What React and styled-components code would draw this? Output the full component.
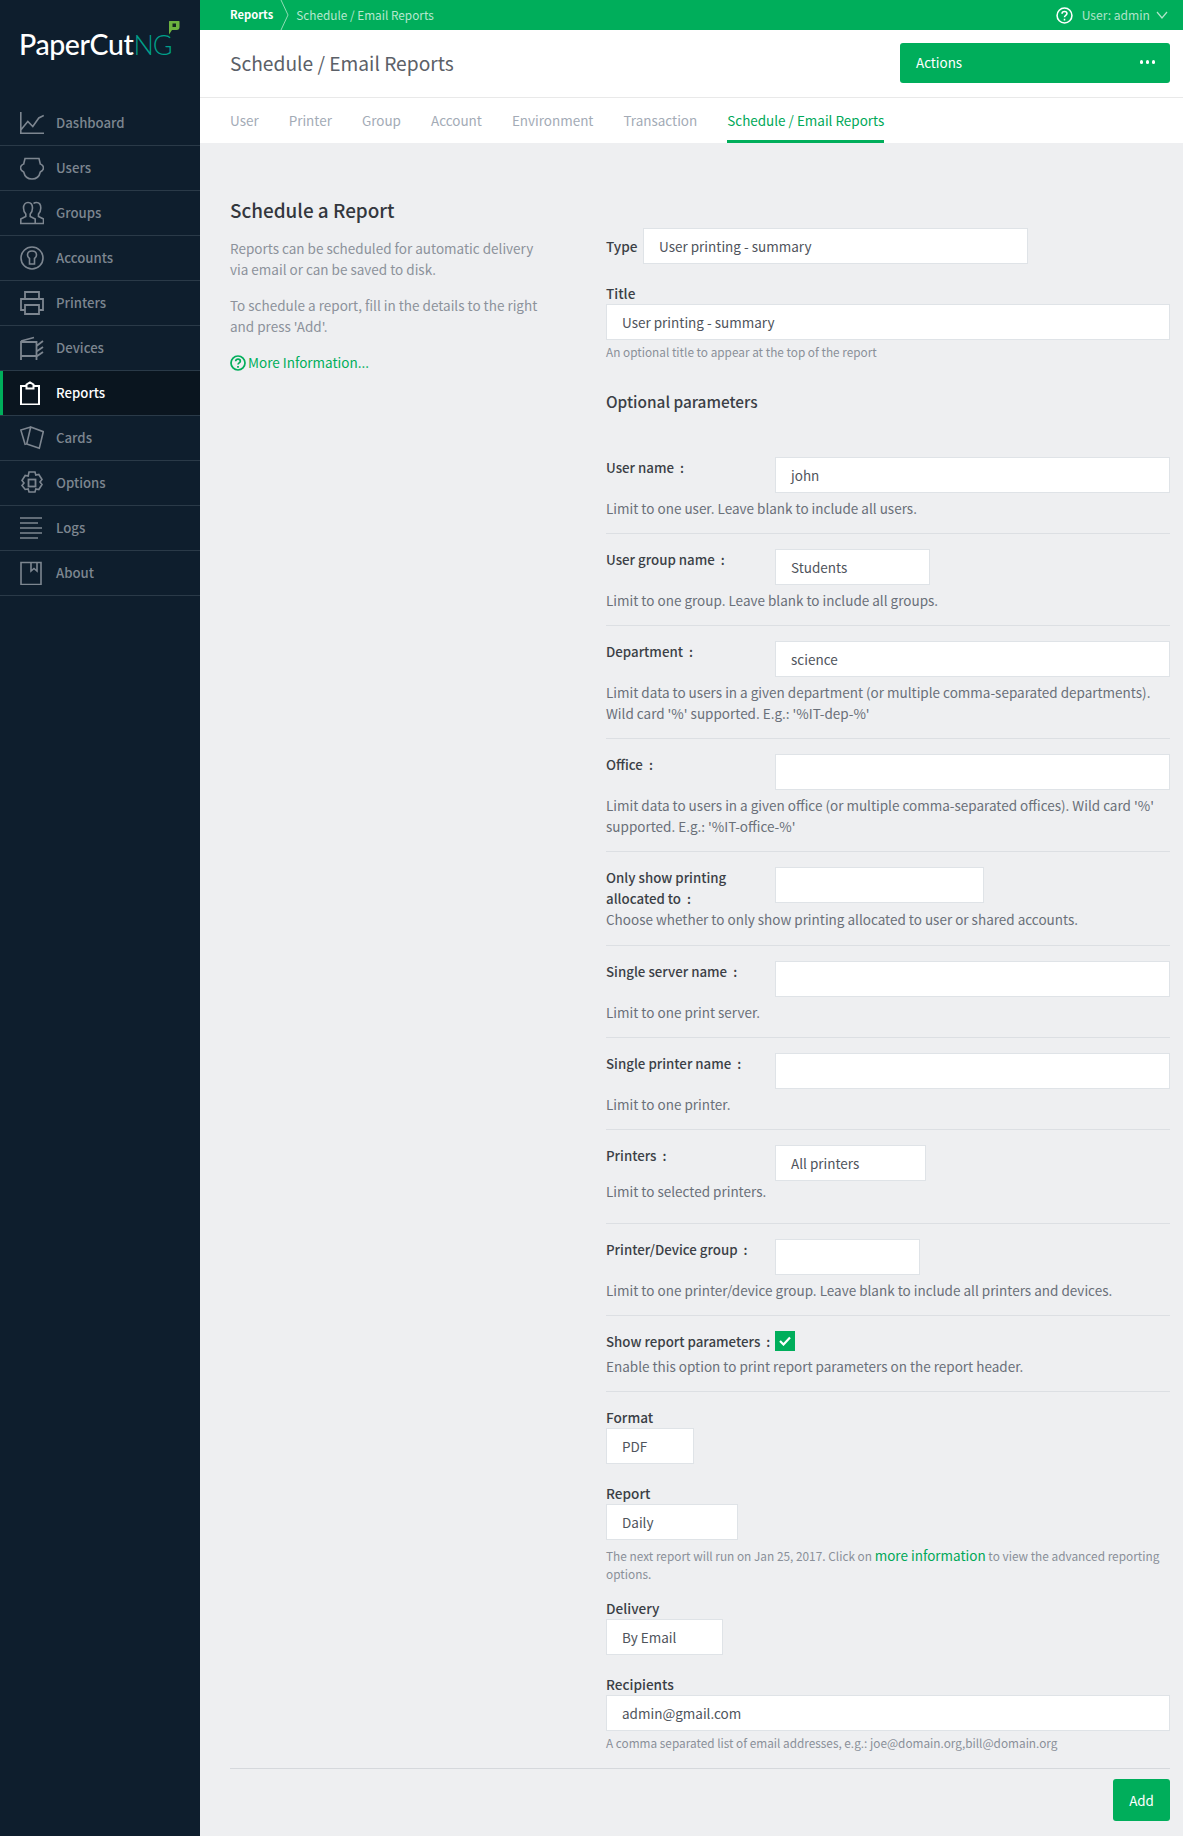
import React from "react";
import styled, { createGlobalStyle } from "styled-components";

const FONT = `"Noto Sans CJK SC", "Source Sans Pro", "Lato", sans-serif`;
const GREEN = "#00ae5b";

const Global = createGlobalStyle`
  html, body { margin: 0; padding: 0; background: #eeeff1; }
  body { font-family: ${FONT}; font-size: 13.5px; color: #4a4f57; }
  * { box-sizing: border-box; }
`;

const Page = styled.div`
  display: grid;
  grid-template-columns: 200px 1fr;
  width: 1183px;
  height: 1836px;
  overflow: hidden;
`;
const Sidebar = styled.aside`
  background: #0e1e2d;
  display: flex;
  flex-direction: column;
`;
const LogoWrap = styled.div`
  height: 101px;
  padding: 20px 0 0 19px;
  display: flex;
  align-items: flex-start;
`;
const LogoText = styled.div`
  position: relative;
  font-family: "Lato", sans-serif;
  font-weight: 500;
  font-size: 28.5px;
  line-height: 30px;
  padding-top: 9px;
  color: #fff;
  letter-spacing: -0.4px;
  white-space: nowrap;
`;
const LogoNg = styled.span`
  color: #00a08a;
  font-weight: 300;
  font-size: 27px;
  letter-spacing: -1px;
`;
const LogoLeaf = styled.svg`
  position: absolute;
  left: 149px;
  top: 0;
`;
const NavList = styled.nav`
  display: flex;
  flex-direction: column;
`;
const NavItem = styled.a`
  height: 45px;
  display: flex;
  align-items: center;
  gap: 12px;
  padding-left: 20px;
  border-bottom: 1px solid #2a3a48;
  color: ${(p) => (p.$active ? "#fff" : "#7d8690")};
  background: ${(p) => (p.$active ? "#0a151f" : "transparent")};
  box-shadow: ${(p) => (p.$active ? `inset 3px 0 0 ${GREEN}` : "none")};
  font-size: 13.2px;
  font-weight: 500;
  line-height: 20px;
`;
const NavIcon = styled.svg`
  width: 24px;
  height: 24px;
  flex: none;
  fill: none;
  stroke: currentColor;
  stroke-width: 1.6;
`;
const Main = styled.main`
  display: flex;
  flex-direction: column;
  min-width: 0;
`;
const TopBar = styled.div`
  height: 30px;
  background: ${GREEN};
  display: flex;
  align-items: center;
  justify-content: space-between;
  padding: 0 15px 0 30px;
`;
const Crumbs = styled.div`
  display: flex;
  align-items: center;
  height: 30px;
`;
const CrumbRoot = styled.span`
  color: #fff;
  font-weight: 700;
  font-size: 11.2px;
  padding-bottom: 2px;
`;
const CrumbSep = styled.svg`
  width: 10px;
  height: 30px;
  margin: 0 6px 0 7px;
  fill: none;
  stroke: #8fdcb5;
`;
const CrumbLeaf = styled.span`
  color: #b7e8cf;
  font-size: 11.8px;
  padding-bottom: 2px;
`;
const UserBox = styled.div`
  display: flex;
  align-items: center;
  color: #b0e4ca;
  font-size: 12.1px;
`;
const UserName = styled.span`
  padding-bottom: 1px;
`;
const HelpIcon = styled.svg`
  width: 17px;
  height: 17px;
  margin-right: 9px;
`;
const Chevron = styled.svg`
  width: 12px;
  height: 8px;
  margin-left: 6px;
  fill: none;
  stroke: #b0e4ca;
  stroke-width: 1.2;
`;
const Header = styled.header`
  height: 68px;
  background: #fff;
  border-bottom: 1px solid #e9e9e9;
  display: flex;
  align-items: flex-start;
  justify-content: space-between;
  padding: 13px 13px 0 30px;
`;
const Title = styled.h1`
  margin: 0;
  font-size: 19.2px;
  font-weight: 400;
  line-height: 40px;
  color: #5b6068;
`;
const ActionsButton = styled.div`
  width: 270px;
  height: 40px;
  background: ${GREEN};
  border-radius: 3px;
  color: #fff;
  display: flex;
  align-items: center;
  justify-content: space-between;
  padding: 0 15px 2px 16px;
  font-size: 13.4px;
`;
const Dots = styled.span`
  display: flex;
  gap: 2.5px;
  & > i {
    width: 3.5px;
    height: 3.5px;
    border-radius: 50%;
    background: #fff;
  }
`;
const Tabs = styled.div`
  height: 45px;
  background: #fff;
  display: flex;
  gap: 30px;
  padding-left: 30px;
`;
const Tab = styled.a`
  height: 45px;
  display: flex;
  align-items: center;
  padding-top: 1px;
  font-size: 13.47px;
  color: ${(p) => (p.$active ? "#00a858" : "#a3abb6")};
  border-bottom: 3px solid ${(p) => (p.$active ? GREEN : "transparent")};
`;
const Content = styled.div`
  display: grid;
  grid-template-columns: 376px 1fr;
  padding: 0 13px 0 30px;
  background: #eeeff1;
`;
const Intro = styled.section`
  padding-top: 52px;
`;
const IntroTitle = styled.h2`
  margin: 0 0 13px;
  font-size: 18.9px;
  line-height: 30px;
  font-weight: 500;
  color: #33373d;
`;
const IntroText = styled.p`
  margin: 0 0 15px;
  width: 320px;
  font-size: 13.5px;
  line-height: 21px;
  color: #8c929b;
`;
const InfoLink = styled.a`
  display: flex;
  align-items: center;
  gap: 2px;
  color: #00ae5b;
  font-size: 13.5px;
  line-height: 21px;
`;
const Form = styled.section`
  padding-top: 85px;
  display: flex;
  flex-direction: column;
`;
const Input = styled.div`
  height: 36px;
  width: ${(p) => (p.$w ? `${p.$w}px` : "100%")};
  flex: none;
  background: #fff;
  border: 1px solid #dfe3e7;
  padding: 0 15px 1px;
  display: flex;
  align-items: center;
  font-size: 13.5px;
  color: #4f545c;
`;
const InlineField = styled.div`
  display: flex;
  align-items: center;
  margin-bottom: 19px;
`;
const Label = styled.label`
  display: block;
  flex: none;
  width: ${(p) => (p.$w ? `${p.$w}px` : "auto")};
  font-size: 13.6px;
  line-height: 21px;
  font-weight: 500;
  color: #3b3f46;
`;
const StackField = styled.div`
  display: flex;
  flex-direction: column;
  margin-bottom: ${(p) => p.$mb ?? 19}px;
`;
const Hint = styled.div`
  margin-top: 3px;
  font-size: 11.8px;
  line-height: 18px;
  color: #8a9099;
`;
const Section = styled.h3`
  margin: 28px 0 44px;
  font-size: 15.4px;
  line-height: 24px;
  font-weight: 500;
  color: #3b3f46;
`;
const Row = styled.div`
  border-bottom: 1px solid #dcdfe3;
  padding-bottom: ${(p) => p.$pb ?? 14}px;
  margin-bottom: 15px;
`;
const RowTop = styled.div`
  display: grid;
  grid-template-columns: 169px 1fr;
  align-items: start;
`;
const RowLabel = styled.div`
  padding-top: 1px;
  font-size: 13.3px;
  line-height: 20.5px;
  font-weight: 500;
  color: #3b3f46;
`;
const Desc = styled.div`
  margin-top: ${(p) => p.$mt ?? 5}px;
  font-size: 13.5px;
  line-height: 21px;
  color: #6a7079;
  white-space: pre-line;
`;
const Check = styled.span`
  width: 20px;
  height: 20px;
  background: ${GREEN};
  display: flex;
  align-items: center;
  justify-content: center;
`;
const Note = styled.div`
  margin-top: 7px;
  font-size: 11.85px;
  line-height: 18px;
  color: #8a9099;
`;
const NoteLink = styled.a`
  color: #00a858;
  font-size: 13.5px;
  line-height: 14px;
`;
const Footer = styled.div`
  border-top: 1px solid #d5d8dc;
  margin: 16px 13px 0 30px;
  display: flex;
  justify-content: flex-end;
  padding-top: 10px;
`;
const AddButton = styled.div`
  width: 57px;
  height: 42px;
  background: ${GREEN};
  border-radius: 3px;
  color: #fff;
  font-size: 13.4px;
  display: flex;
  align-items: center;
  justify-content: center;
`;

const icons = {
  Dashboard: <path d="M.8 1v21.200H24M.8 19l7-8.500 5 5 6-8.500 5-2.500" />,
  Users: <path d="M5 2.500h14l1.300 5.500c1 0 3.200 2 3.200 4s-2.200 3.500-3.200 4c-1 4.500-4 7-8.300 7s-7.300-2.500-8.300-7C2.700 15.500.5 14 .5 12S2.700 8 3.700 8z" />,
  Groups: <path d="M.8 22.500V18l5-2.500V13C4 11 3.500 9 3.500 7c0-3.500 2-5.500 4.500-5.500s4.500 2 4.500 5.500c0 2-.5 4-2.300 6v2.500l5 2.500v4.500zM13.500 2.500c1-1 2-1 3-1 2.500 0 4.300 2 4.300 5.500 0 2-.5 4-2.300 6v2.500l5 2.500v4.500h-8" />,
  Accounts: (
    <>
      <circle cx="12" cy="12" r="11" />
      <path d="M9.500 18v-5.500C8 11.500 7.500 10.500 7.500 9c0-2.500 2-4 4.500-4s4.500 1.500 4.500 4c0 1.500-.5 2.500-2 3.500V18z" />
    </>
  ),
  Printers: <path d="M5 8V1h14v7M5 19H1V8h22v11h-4M5 14h14v9H5z" strokeWidth="1.8" />,
  Devices: <path d="M1 24V6h15.500v18M1 20h15.500M1 5l13-3.500M23 5l-6.500 5M23 11l-6.500 4.500M23 16l-6.500 4.500" strokeWidth="1.8" />,
  Reports: <path d="M1 5h5.500V3.500L10 1.500l3.500 2V5H19v18.500H1zM6.500 5v2.500h7V5" strokeWidth="2" />,
  Cards: <path d="M10.700 1L23.300 5.700 19.300 22.300 6.700 18zM10.700 1L0.800 4l4.500 15" />,
  Options: (
    <>
      <path d="M9 1h6l.8 3 3-.5 3.200 5-2 2.500 2 2.500-3.200 5-3-.5-.8 3H9l-.8-3-3 .5L2 14.500 4 12 2 9.500l3.200-5 3 .5z" />
      <rect x="8.500" y="8.500" width="7" height="7" strokeWidth="1.800" />
    </>
  ),
  Logs: <path d="M0 2h22M0 7h18M0 12h22M0 17h22M0 22h18" />,
  About: <path d="M1 1.500h20v22H1zM11 1.500v8.500l3-2.500 3 2.500V1.500" />,
};
const navItems = ["Dashboard", "Users", "Groups", "Accounts", "Printers", "Devices", "Reports", "Cards", "Options", "Logs", "About"];
const tabs = ["User", "Printer", "Group", "Account", "Environment", "Transaction", "Schedule / Email Reports"];

const params = [
  { label: "User name", value: "john", desc: "Limit to one user. Leave blank to include all users." },
  { label: "User group name", value: "Students", w: 155, desc: "Limit to one group. Leave blank to include all groups." },
  { label: "Department", value: "science", desc: "Limit data to users in a given department (or multiple comma-separated departments).\nWild card '%' supported. E.g.: '%IT-dep-%'" },
  { label: "Office", value: "", desc: "Limit data to users in a given office (or multiple comma-separated offices). Wild card '%'\nsupported. E.g.: '%IT-office-%'" },
  { label: "Only show printing allocated to", value: "", w: 209, mt: 0, pb: 15, desc: "Choose whether to only show printing allocated to user or shared accounts." },
  { label: "Single server name", value: "", desc: "Limit to one print server." },
  { label: "Single printer name", value: "", desc: "Limit to one printer." },
  { label: "Printers", value: "All printers", w: 151, mt: 0, pb: 21, desc: "Limit to selected printers." },
  { label: "Printer/Device group", value: "", w: 145, desc: "Limit to one printer/device group. Leave blank to include all printers and devices." },
];

export default function App() {
  return (
    <Page>
      <Global />
      <Sidebar>
        <LogoWrap>
          <LogoText>
            PaperCut<LogoNg>NG</LogoNg>
            <LogoLeaf width="12" height="15" viewBox="0 0 12 15">
              <path d="M1.500 1h9.500a.5.5 0 0 1 .5.5V7c0 2-1 3-3 3H4l-3 4.500V1.500a.5.5 0 0 1 .5-.5z" fill="#6cb33f" />
              <rect x="4.500" y="3.500" width="3.500" height="3.500" fill="#12261f" />
            </LogoLeaf>
          </LogoText>
        </LogoWrap>
        <NavList>
          {navItems.map((n) => (
            <NavItem key={n} $active={n === "Reports"}>
              <NavIcon viewBox="0 0 24 24">{icons[n]}</NavIcon>
              {n}
            </NavItem>
          ))}
        </NavList>
      </Sidebar>
      <Main>
        <TopBar>
          <Crumbs>
            <CrumbRoot>Reports</CrumbRoot>
            <CrumbSep viewBox="0 0 10 30"><path d="M1 0l7 15-7 15" /></CrumbSep>
            <CrumbLeaf>Schedule / Email Reports</CrumbLeaf>
          </Crumbs>
          <UserBox>
            <HelpIcon viewBox="0 0 24 24" fill="none" stroke="#fff" strokeWidth="2.200">
              <circle cx="12" cy="12" r="10.500" />
              <path d="M8.500 9.500c0-2 1.500-3.200 3.500-3.200s3.500 1.200 3.500 3c0 2.500-3.500 2.500-3.500 5M12 16.500v2.500" />
            </HelpIcon>
            <UserName>User: admin</UserName>
            <Chevron viewBox="0 0 12 8"><path d="M1 1l5 6 5-6" /></Chevron>
          </UserBox>
        </TopBar>
        <Header>
          <Title>Schedule / Email Reports</Title>
          <ActionsButton>
            Actions
            <Dots><i /><i /><i /></Dots>
          </ActionsButton>
        </Header>
        <Tabs>
          {tabs.map((t, i) => (
            <Tab key={t} $active={i === 6}>{t}</Tab>
          ))}
        </Tabs>
        <Content>
          <Intro>
            <IntroTitle>Schedule a Report</IntroTitle>
            <IntroText>Reports can be scheduled for automatic delivery via email or can be saved to disk.</IntroText>
            <IntroText>To schedule a report, fill in the details to the right and press 'Add'.</IntroText>
            <InfoLink>
              <svg width="16" height="16" viewBox="0 0 24 24" fill="none" stroke={GREEN} strokeWidth="2.600">
                <circle cx="12" cy="12" r="10.500" />
                <path d="M8.500 9.500c0-2 1.500-3.200 3.500-3.200s3.500 1.200 3.500 3c0 2.500-3.500 2.500-3.500 5M12 16.500v2.500" />
              </svg>
              More Information...
            </InfoLink>
          </Intro>
          <Form>
            <InlineField>
              <Label $w={37}>Type</Label>
              <Input $w={385}>User printing - summary</Input>
            </InlineField>
            <StackField $mb={0}>
              <Label>Title</Label>
              <Input>User printing - summary</Input>
              <Hint>An optional title to appear at the top of the report</Hint>
            </StackField>
            <Section>Optional parameters</Section>
            {params.map((p) => (
              <Row key={p.label} $pb={p.pb}>
                <RowTop>
                  <RowLabel>{p.label}&nbsp; :</RowLabel>
                  <Input $w={p.w}>{p.value}</Input>
                </RowTop>
                <Desc $mt={p.mt}>{p.desc}</Desc>
              </Row>
            ))}
            <Row>
              <RowTop>
                <RowLabel>Show report parameters&nbsp; :</RowLabel>
                <Check>
                  <svg width="12" height="10" viewBox="0 0 12 10" fill="none" stroke="#fff" strokeWidth="2.200">
                    <path d="M1 5l3.500 3.500L11 1.500" />
                  </svg>
                </Check>
              </RowTop>
              <Desc $mt={3.5}>Enable this option to print report parameters on the report header.</Desc>
            </Row>
            <StackField>
              <Label>Format</Label>
              <Input $w={88}>PDF</Input>
            </StackField>
            <StackField $mb={15}>
              <Label>Report</Label>
              <Input $w={132}>Daily</Input>
              <Note>
                The next report will run on Jan 25, 2017. Click on <NoteLink>more information</NoteLink> to view the advanced reporting options.
              </Note>
            </StackField>
            <StackField>
              <Label>Delivery</Label>
              <Input $w={117}>By Email</Input>
            </StackField>
            <StackField $mb={0}>
              <Label>Recipients</Label>
              <Input>admin@gmail.com</Input>
              <Hint>A comma separated list of email addresses, e.g.: joe@domain.org,bill@domain.org</Hint>
            </StackField>
          </Form>
        </Content>
        <Footer>
          <AddButton>Add</AddButton>
        </Footer>
      </Main>
    </Page>
  );
}
